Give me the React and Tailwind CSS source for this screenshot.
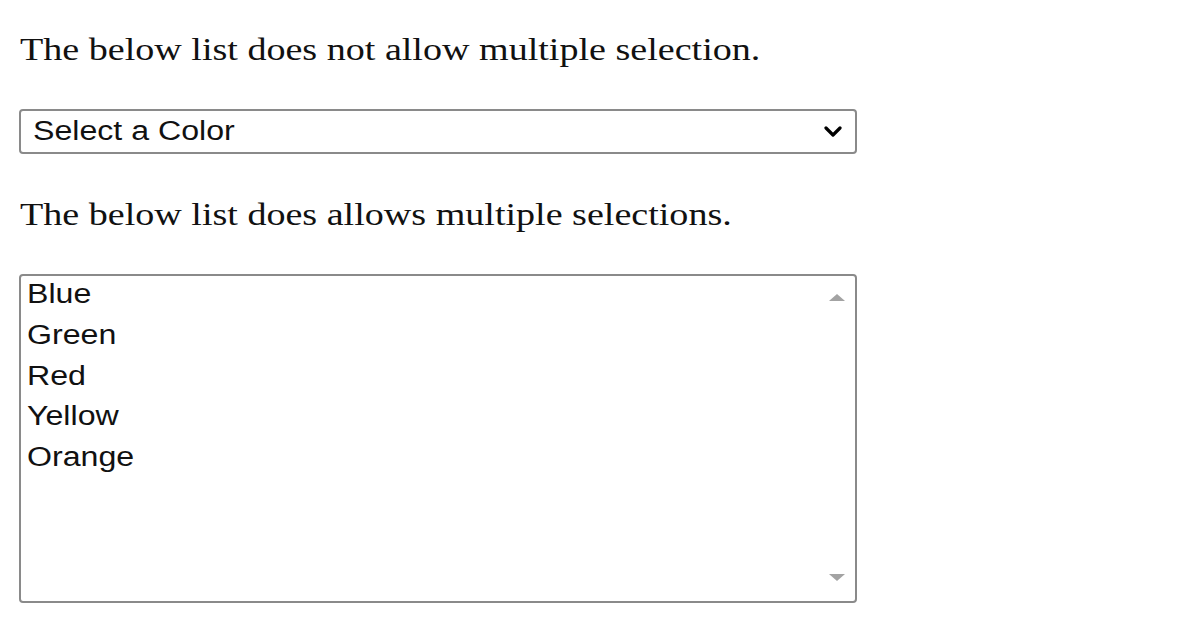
import { useState } from 'react'

const colors = ['Blue', 'Green', 'Red', 'Yellow', 'Orange']

function Chevron() {
  return (
    <svg width="18" height="12" viewBox="0 0 18 12" className="text-black">
      <path d="M2 2 L9 9 L16 2" fill="none" stroke="currentColor" strokeWidth="3.2" strokeLinecap="round" strokeLinejoin="round" />
    </svg>
  )
}

// the page is drawn a little wide, so text is stretched from its left edge
const wide = 'inline-block origin-left scale-x-[1.19]'

export default function App() {
  const [picked] = useState(null)

  return (
    <div className="min-h-[628px] w-[1196px] overflow-hidden bg-white pl-[19px] pt-[31px] text-black">
      <p className="pl-[1px] font-['Liberation_Serif',serif] text-[32px] leading-[36px] text-[#111]">
        <span className={wide}>The below list does not allow multiple selection.</span>
      </p>

      {/* single select */}
      <div className="mt-[42px] flex h-[45px] w-[838px] items-center justify-between rounded-[4px] border-2 border-[#8a8a8a] bg-white pl-[12px] pr-[13px]">
        <span className={`${wide} font-['Liberation_Sans',Arial,sans-serif] text-[27px] leading-none text-[#111]`}>
          {picked || 'Select a Color'}
        </span>
        <Chevron />
      </div>

      <p className="mt-[42px] pl-[1px] font-['Liberation_Serif',serif] text-[32px] leading-[36px] text-[#111]">
        <span className={wide}>The below list does allows multiple selections.</span>
      </p>

      {/* multi select listbox */}
      <div className="relative mt-[42px] h-[329px] w-[838px] rounded-[4px] border-2 border-[#8a8a8a] bg-white pl-[6px]">
        <ul className="-mt-[2px] font-['Liberation_Sans',Arial,sans-serif] text-[27px] leading-[40.75px] text-[#111]">
          {colors.map((c) => (
            <li key={c}>
              <span className={wide}>{c}</span>
            </li>
          ))}
        </ul>
        <div className="absolute right-[10px] top-[18px] h-0 w-0 border-x-[8px] border-b-[7px] border-x-transparent border-b-[#a3a3a3]" />
        <div className="absolute bottom-[20px] right-[10px] h-0 w-0 border-x-[8px] border-t-[7px] border-x-transparent border-t-[#a3a3a3]" />
      </div>
    </div>
  )
}
